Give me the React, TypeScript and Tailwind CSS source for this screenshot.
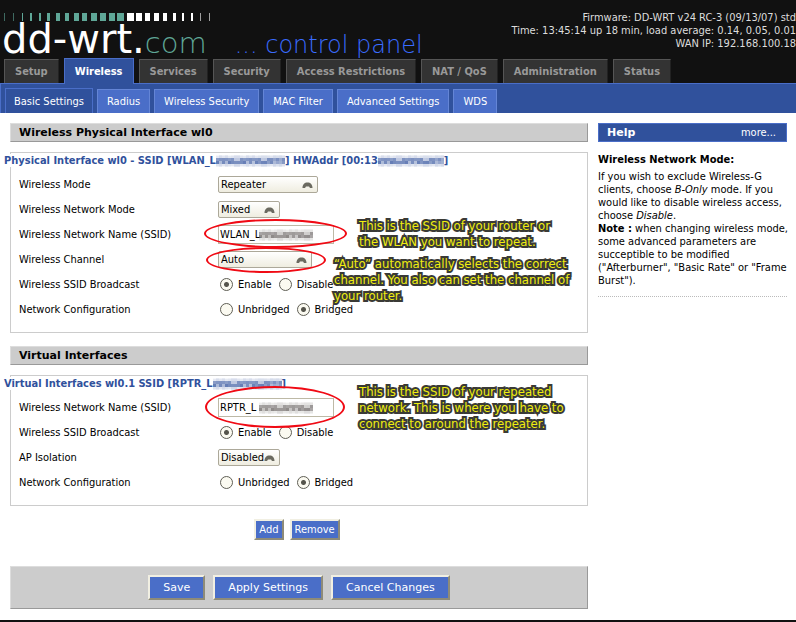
import type { ReactNode } from "react";

const TICKS: [number, number][] = [
  [0, 1], [9, 1], [18, 1], [26, 2], [35, 2], [43, 3], [52, 4], [61, 4], [70, 5], [78, 5], [87, 6], [96, 6], [105, 6], [113, 7],
  [123, 7], [132, 6], [141, 5], [150, 5], [159, 4], [169, 3], [178, 2], [187, 2], [196, 1], [205, 1],
];

const TABS = ["Setup", "Wireless", "Services", "Security", "Access Restrictions", "NAT / QoS", "Administration", "Status"];
const SUB_TABS = ["Basic Settings", "Radius", "Wireless Security", "MAC Filter", "Advanced Settings", "WDS"];

/* Pixelated block that hides the private part of a name or address. */
function Mosaic({ width, color, className = "" }: { width: number; color: string; className?: string }) {
  const cols = Math.ceil(width / 3);
  const rows = [0.1, 0.45, 0.55, 0.12];
  return (
    <svg aria-hidden="true" width={width} height={12} viewBox={`0 0 ${width} 12`} className={className} shapeRendering="crispEdges">
      <rect y="1" width={width} height="10" fill={color} opacity="0.08" />
      {rows.flatMap((base, r) =>
        Array.from({ length: cols }, (_, c) => {
          const v = Math.abs(Math.sin(c * 12.9 + r * 4.1 + c * c * 0.7));
          return <rect key={`${r}-${c}`} x={c * 3} y={r * 3} width={3} height={3} fill={color} opacity={base * (0.45 + v * 0.9)} />;
        }),
      )}
    </svg>
  );
}

function SectionTitle({ children }: { children: ReactNode }) {
  return (
    <h2 className="flex h-[19px] items-center border border-t-[#ddd] border-r-[#999] border-b-[#999] border-l-[#ddd] bg-[#ccc] pl-2 font-['DejaVu_Sans'] text-[11px] font-bold text-black">
      {children}
    </h2>
  );
}

function Group({ legend, children }: { legend: ReactNode; children: ReactNode }) {
  return (
    <fieldset className="relative border border-[#ccc] pb-[10px]">
      <legend className="float-left mt-px -ml-[7px] flex h-[13px] items-center bg-white font-bold whitespace-nowrap text-[#30519c]">{legend}</legend>
      <div className="clear-both pt-[5px] pl-2">{children}</div>
    </fieldset>
  );
}

function Row({ label, htmlFor, children }: { label: string; htmlFor?: string; children: ReactNode }) {
  return (
    <div className="flex h-[25px] items-center">
      {htmlFor ? (
        <label htmlFor={htmlFor} className="w-[199px] shrink-0">{label}</label>
      ) : (
        <span className="w-[199px] shrink-0">{label}</span>
      )}
      {children}
    </div>
  );
}

function Pick({ id, value, className, children }: { id: string; value: string; className: string; children?: ReactNode }) {
  return (
    <div className="relative flex">
      <select id={id} className={`h-[17px] appearance-none rounded-[2px] border border-[#aca899] bg-linear-to-b from-white to-[#efede0] pl-[2px] text-[11px] leading-[13px] text-black ${className}`}>
        <option>{value}</option>
      </select>
      <svg aria-hidden="true" className="pointer-events-none absolute top-[6px] right-[5px]" width="11" height="7" viewBox="0 0 11 7">
        <path d="M0.5 6 C0.5 2.5 2.5 0.5 5.5 0.5 C8.5 0.5 10.5 2.5 10.5 6 L8 6 L7 4.5 L4 4.5 L3 6 Z" fill="#6b6a60" />
      </svg>
      {children}
    </div>
  );
}

function NameBox({ id, value, children }: { id: string; value: string; children: ReactNode }) {
  return (
    <div className="relative flex">
      <input id={id} type="text" defaultValue={value} className="h-[19px] w-[116px] border border-[#bdb9a6] bg-white pl-px text-[11px] leading-[13px] text-black" />
      <Mosaic width={54} color="#66605f" className="pointer-events-none absolute top-1 left-[41px]" />
      {children}
    </div>
  );
}

function Choice({ name, options, selected }: { name: string; options: string[]; selected: string }) {
  return (
    <div className="flex items-center gap-[7px] pl-[2px]">
      {options.map((o) => (
        <label key={o} className="flex items-center gap-[5px]">
          <input
            type="radio"
            name={name}
            defaultChecked={o === selected}
            className="size-[13px] appearance-none rounded-full border border-[#5f5e55] bg-[#fbfaf1] checked:bg-[radial-gradient(circle,#55544c_2px,#fbfaf1_3px)]"
          />
          {o}
        </label>
      ))}
    </div>
  );
}

function Note({ lines, className }: { lines: string[]; className: string }) {
  return (
    <p className={`absolute text-[13px] leading-[16px] whitespace-nowrap text-[#f0ee10] [-webkit-text-stroke:4px_#3a3a36] [paint-order:stroke_fill] [stroke-linejoin:round] ${className}`}>
      {lines.map((l) => (
        <span key={l} className="block">{l}</span>
      ))}
    </p>
  );
}

function Ring({ className }: { className: string }) {
  return <span aria-hidden="true" className={`pointer-events-none absolute rounded-[50%] border-2 border-[#f00a14] ${className}`} />;
}

const bevel = "border-2 border-t-[#f1efe2] border-r-[#8e8b78] border-b-[#8e8b78] border-l-[#f1efe2] bg-[#4a6ec8] text-white";

export default function App() {
  return (
    <div className="bg-white font-['DejaVu_Sans_Condensed','DejaVu_Sans',sans-serif] text-[11px] leading-[13px] text-black">
      <header className="bg-[#111]">
        <div className="flex h-[58px] justify-between">
          <div className="flex flex-col pt-[13px] pl-1 font-['DejaVu_Sans']">
            <svg aria-hidden="true" width="210" height="8" viewBox="0 0 210 8" shapeRendering="crispEdges">
              {TICKS.map(([x, w], i) => (
                <rect key={x} x={x} y="0" width={w} height="8" fill={i < 14 ? "#5fa797" : "#fff"} opacity={i < 2 || i > 21 ? 0.6 : 1} />
              ))}
            </svg>
            <div className="-ml-[2px] flex items-baseline whitespace-nowrap">
              <span className="text-[40px] leading-[36px] text-white">dd-wrt.</span>
              <span className="text-[29px] leading-[29px] font-extralight text-[#5fa797]">com</span>
              <span className="ml-7 text-[24px] leading-[24px] font-extralight text-[#3a6cff]">... control panel</span>
            </div>
          </div>
          <div className="pt-[11px] text-right whitespace-nowrap text-[#ddd]">
            <div>Firmware: DD-WRT v24 RC-3 (09/13/07) std</div>
            <div>Time: 13:45:14 up 18 min, load average: 0.14, 0.05, 0.01</div>
            <div>WAN IP: 192.168.100.18</div>
          </div>
        </div>
        <nav className="flex h-[25px] items-end gap-[5px] pl-1 font-bold whitespace-nowrap">
          {TABS.map((t) =>
            t === "Wireless" ? (
              <a key={t} href="#" className="-mb-px flex h-[26px] items-center border border-b-0 border-[#4a6ec8] bg-[#30519c] px-[10px] text-white">{t}</a>
            ) : (
              <a key={t} href="#" className="flex h-6 items-center border border-b-0 border-[#555] border-r-[#222] bg-[#333] px-[10px] text-[#999]">{t}</a>
            ),
          )}
        </nav>
      </header>
      <nav className="flex h-[30px] items-end gap-1 border-t border-l border-[#4a6ec8] bg-[#30519c] pl-1 whitespace-nowrap text-white">
        {SUB_TABS.map((t, i) => (
          <a
            key={t}
            href="#"
            className={i === 0 ? "flex h-[25px] items-center border border-b-0 border-[#4a6ec8] px-2" : "flex h-6 items-center border border-b-0 border-[#6485d6] bg-[#4a6ec8] px-[9px]"}
          >
            {t}
          </a>
        ))}
      </nav>

      <div className="flex gap-[10px] pt-[10px] pr-[9px] pb-[11px] pl-[10px]">
        <form className="min-w-0 flex-1">
          <SectionTitle>Wireless Physical Interface wl0</SectionTitle>
          <div className="mt-[10px] mb-[13px]">
            <Group
              legend={
                <>
                  Physical Interface wl0 - SSID [WLAN_L
                  <Mosaic width={69} color="#30519c" />] HWAddr [00:13
                  <Mosaic width={66} color="#30519c" />]
                </>
              }
            >
              <Row label="Wireless Mode" htmlFor="mode"><Pick id="mode" value="Repeater" className="w-[100px]" /></Row>
              <Row label="Wireless Network Mode" htmlFor="netmode"><Pick id="netmode" value="Mixed" className="w-[62px]" /></Row>
              <Row label="Wireless Network Name (SSID)" htmlFor="ssid">
                <NameBox id="ssid" value="WLAN_L"><Ring className="-top-[6px] -left-[14px] h-[29px] w-[143px]" /></NameBox>
              </Row>
              <Row label="Wireless Channel" htmlFor="channel">
                <Pick id="channel" value="Auto" className="w-[94px]"><Ring className="-top-1 -left-3 h-[26px] w-[120px]" /></Pick>
              </Row>
              <Row label="Wireless SSID Broadcast"><Choice name="cast" options={["Enable", "Disable"]} selected="Enable" /></Row>
              <Row label="Network Configuration"><Choice name="net" options={["Unbridged", "Bridged"]} selected="Bridged" /></Row>
              <Note className="top-[65px] left-[348px]" lines={["This is the SSID of your router or", "the WLAN you want to repeat."]} />
              <Note className="top-[103px] left-[323px]" lines={["“Auto” automatically selects the correct", "channel. You also can set the channel of", "your router."]} />
            </Group>
          </div>

          <SectionTitle>Virtual Interfaces</SectionTitle>
          <div className="mt-[10px] mb-[13px]">
            <Group
              legend={
                <>
                  Virtual Interfaces wl0.1 SSID [RPTR_L
                  <Mosaic width={69} color="#30519c" />]
                </>
              }
            >
              <Row label="Wireless Network Name (SSID)" htmlFor="vssid">
                <NameBox id="vssid" value="RPTR_L"><Ring className="-top-3 -left-[13px] h-[42px] w-[140px]" /></NameBox>
              </Row>
              <Row label="Wireless SSID Broadcast"><Choice name="vcast" options={["Enable", "Disable"]} selected="Enable" /></Row>
              <Row label="AP Isolation" htmlFor="isolation"><Pick id="isolation" value="Disabled" className="w-[62px]" /></Row>
              <Row label="Network Configuration"><Choice name="vnet" options={["Unbridged", "Bridged"]} selected="Bridged" /></Row>
              <Note className="top-2 left-[348px]" lines={["This is the SSID of your repeated", "network. This is where you have to", "connect to around the repeater."]} />
            </Group>
          </div>

          <div className="flex justify-center gap-[6px] pr-1">
            <button type="button" className={`h-[21px] px-[3px] ${bevel}`}>Add</button>
            <button type="button" className={`h-[21px] px-[3px] ${bevel}`}>Remove</button>
          </div>

          <div className="mt-[26px] flex h-[43px] items-center justify-center gap-2 border border-t-[#ddd] border-r-[#999] border-b-[#999] border-l-[#ddd] bg-[#ccc] font-['DejaVu_Sans']">
            <button type="button" className={`h-[25px] px-[13px] ${bevel}`}>Save</button>
            <button type="button" className={`h-[25px] px-[13px] ${bevel}`}>Apply Settings</button>
            <button type="button" className={`h-[25px] px-[13px] ${bevel}`}>Cancel Changes</button>
          </div>
        </form>

        <aside className="w-[189px] shrink-0">
          <div className="flex h-[19px] items-center justify-between border border-[#4a6ec8] bg-[#30519c] pr-[10px] pl-2 text-white">
            <h2 className="font-['DejaVu_Sans'] font-bold">Help</h2>
            <a href="#">more...</a>
          </div>
          <dl className="mt-[11px] border-b border-dotted border-[#bbb] pb-[9px]">
            <dt className="font-bold">Wireless Network Mode:</dt>
            <dd className="mt-1 -mr-1">
              If you wish to exclude Wireless-G clients, choose <i>B-Only</i> mode. If you would like to disable wireless access, choose <i>Disable</i>.
              <br />
              <b>Note :</b> when changing wireless mode, some advanced parameters are succeptible to be modified ("Afterburner", "Basic Rate" or "Frame Burst").
            </dd>
          </dl>
        </aside>
      </div>
      <footer className="h-[2px] bg-[#111]" />
    </div>
  );
}
